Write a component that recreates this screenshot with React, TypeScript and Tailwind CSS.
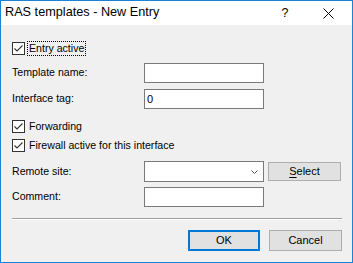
import React from 'react';

const font = { fontFamily: '"Liberation Sans", Arial, sans-serif' };

const Check: React.FC = () => (
    <span className="w-[13px] h-[13px] border border-[#333333] bg-white flex items-center justify-center shrink-0">
        <svg width="11" height="11" viewBox="0 0 11 11">
            <path d="M1.5 5.5 L4 8 L9.5 2.5" fill="none" stroke="#333333" strokeWidth="1.1" />
        </svg>
    </span>
);

const TextBox: React.FC<{ value?: string }> = ({ value }) => (
    <div className="w-[120px] h-[20px] border border-[#7a7a7a] bg-white text-[11px] leading-[18px] pl-[2px] text-black">
        {value}
    </div>
);

const App: React.FC = () => {
    return (
        <div
            className="w-[353px] h-[263px] border border-[#1883d7] bg-[#f0f0f0] flex flex-col text-[10.6px] text-black"
            style={font}
        >
            {/* Title bar */}
            <div className="h-[24px] bg-white flex items-center shrink-0">
                <span className="pl-[4px] text-[12.7px] flex-1">RAS templates - New Entry</span>
                <span className="w-[20px] text-center text-[12.5px] mr-[28px]">?</span>
                <svg width="11" height="11" viewBox="0 0 11 11" className="mr-[18px]">
                    <path d="M0.5 0.5 L10.5 10.5 M10.5 0.5 L0.5 10.5" stroke="#000" strokeWidth="1" />
                </svg>
            </div>

            {/* Body */}
            <div className="flex flex-col pl-[11px] pr-[10px]">
                <div className="mt-[16px] h-[15px] flex items-center gap-[2px]">
                    <Check />
                    <span className="border border-dotted border-black px-[1px] leading-[13px]">Entry active</span>
                </div>

                <div className="mt-[7px] flex items-center">
                    <span className="w-[132px]">Template name:</span>
                    <TextBox />
                </div>
                <div className="mt-[6px] flex items-center">
                    <span className="w-[132px]">Interface tag:</span>
                    <TextBox value="0" />
                </div>

                <div className="mt-[11px] h-[13px] flex items-center gap-[4px]">
                    <Check />
                    <span>Forwarding</span>
                </div>
                <div className="mt-[6px] h-[13px] flex items-center gap-[4px]">
                    <Check />
                    <span>Firewall active for this interface</span>
                </div>

                <div className="mt-[9px] flex items-center">
                    <span className="w-[132px]">Remote site:</span>
                    <div className="w-[120px] h-[21px] border border-[#7a7a7a] bg-white flex items-center justify-end pr-[5px]">
                        <svg width="7" height="4" viewBox="0 0 7 4">
                            <path d="M0.5 0.5 L3.5 3.5 L6.5 0.5" fill="none" stroke="#555" strokeWidth="1" />
                        </svg>
                    </div>
                    <button className="ml-[4px] w-[73px] h-[19px] border border-[#adadad] bg-[#e1e1e1] text-[11px] leading-[17px]">
                        <span className="underline underline-offset-2">S</span>elect
                    </button>
                </div>
                <div className="mt-[5px] flex items-center">
                    <span className="w-[132px]">Comment:</span>
                    <TextBox />
                </div>

                <div className="mt-[11px] h-[2px] border-t border-[#a0a0a0] border-b border-b-white" />

                <div className="mt-[10px] flex justify-end gap-[9px]">
                    <button className="w-[72px] h-[21px] border-2 border-[#0078d7] bg-[#e1e1e1] text-[11px]">OK</button>
                    <button className="w-[73px] h-[21px] border border-[#adadad] bg-[#e1e1e1] text-[11px]">Cancel</button>
                </div>
            </div>
        </div>
    );
};

export default App;
